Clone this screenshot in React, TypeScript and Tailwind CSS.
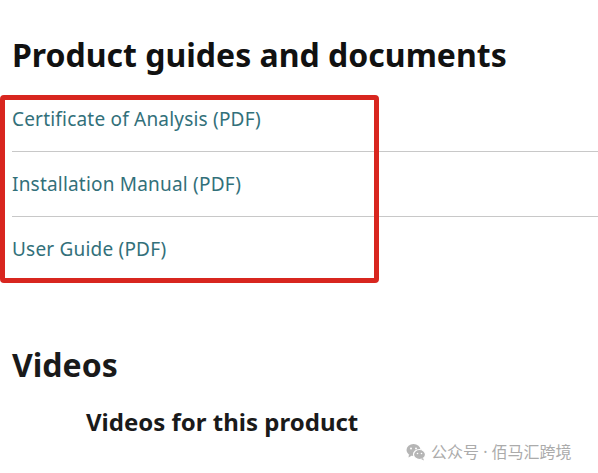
import React from 'react';

const DOCS = ['Certificate of Analysis (PDF)', 'Installation Manual (PDF)', 'User Guide (PDF)'];

const WeChatIcon: React.FC = () => (
  <svg width="20" height="18" viewBox="0 0 20 18" className="shrink-0">
    <ellipse cx="7.5" cy="7" rx="7" ry="6" fill="#b5b5b5" />
    <path d="M3 11.5 L2.5 14.5 L6 12.5 Z" fill="#b5b5b5" />
    <ellipse cx="13.5" cy="11.5" rx="6" ry="5" fill="#b5b5b5" stroke="#fff" strokeWidth="1.2" />
    <path d="M17 15 L18 17.5 L15 16 Z" fill="#b5b5b5" />
    <circle cx="5" cy="5.5" r="1" fill="#fff" />
    <circle cx="10" cy="5.5" r="1" fill="#fff" />
    <circle cx="11.5" cy="10.5" r="0.8" fill="#fff" />
    <circle cx="15.5" cy="10.5" r="0.8" fill="#fff" />
  </svg>
);

const App: React.FC = () => {
  return (
    <div className="relative w-[598px] h-[473px] overflow-hidden bg-white font-['Noto_Sans',sans-serif]">
      <h1 className="pl-[12px] pt-[33px] text-[32px] leading-[44px] font-bold text-[#111111]">
        Product guides and documents
      </h1>

      <div className="relative mt-[10px]">
        <ul>
          {DOCS.map((doc, i) => (
            <li
              key={doc}
              className={`ml-[12px] h-[65px] flex items-center ${i < DOCS.length - 1 ? 'border-b border-[#c8c8c8]' : ''}`}
            >
              <span className="text-[19px] text-[#32707a] tracking-[0.2px]">{doc}</span>
            </li>
          ))}
        </ul>
        <div className="absolute left-0 top-[8px] w-[379px] h-[188px] border-[5px] border-[#d8261f] rounded-[4px]" />
      </div>

      <h2 className="pl-[12px] mt-[61px] text-[32px] leading-[44px] font-bold text-[#1a1a1a]">
        Videos
      </h2>
      <h3 className="pl-[86px] mt-[19px] text-[24px] leading-[32px] font-bold text-[#1a1a1a]">
        Videos for this product
      </h3>

      <div className="absolute left-[406px] top-[440px] flex items-center gap-[5px] text-[16px] text-[#ababab] font-['Noto_Sans','Noto_Sans_CJK_SC',sans-serif]">
        <WeChatIcon />
        <span>公众号 · 佰马汇跨境</span>
      </div>
    </div>
  );
};

export default App;
